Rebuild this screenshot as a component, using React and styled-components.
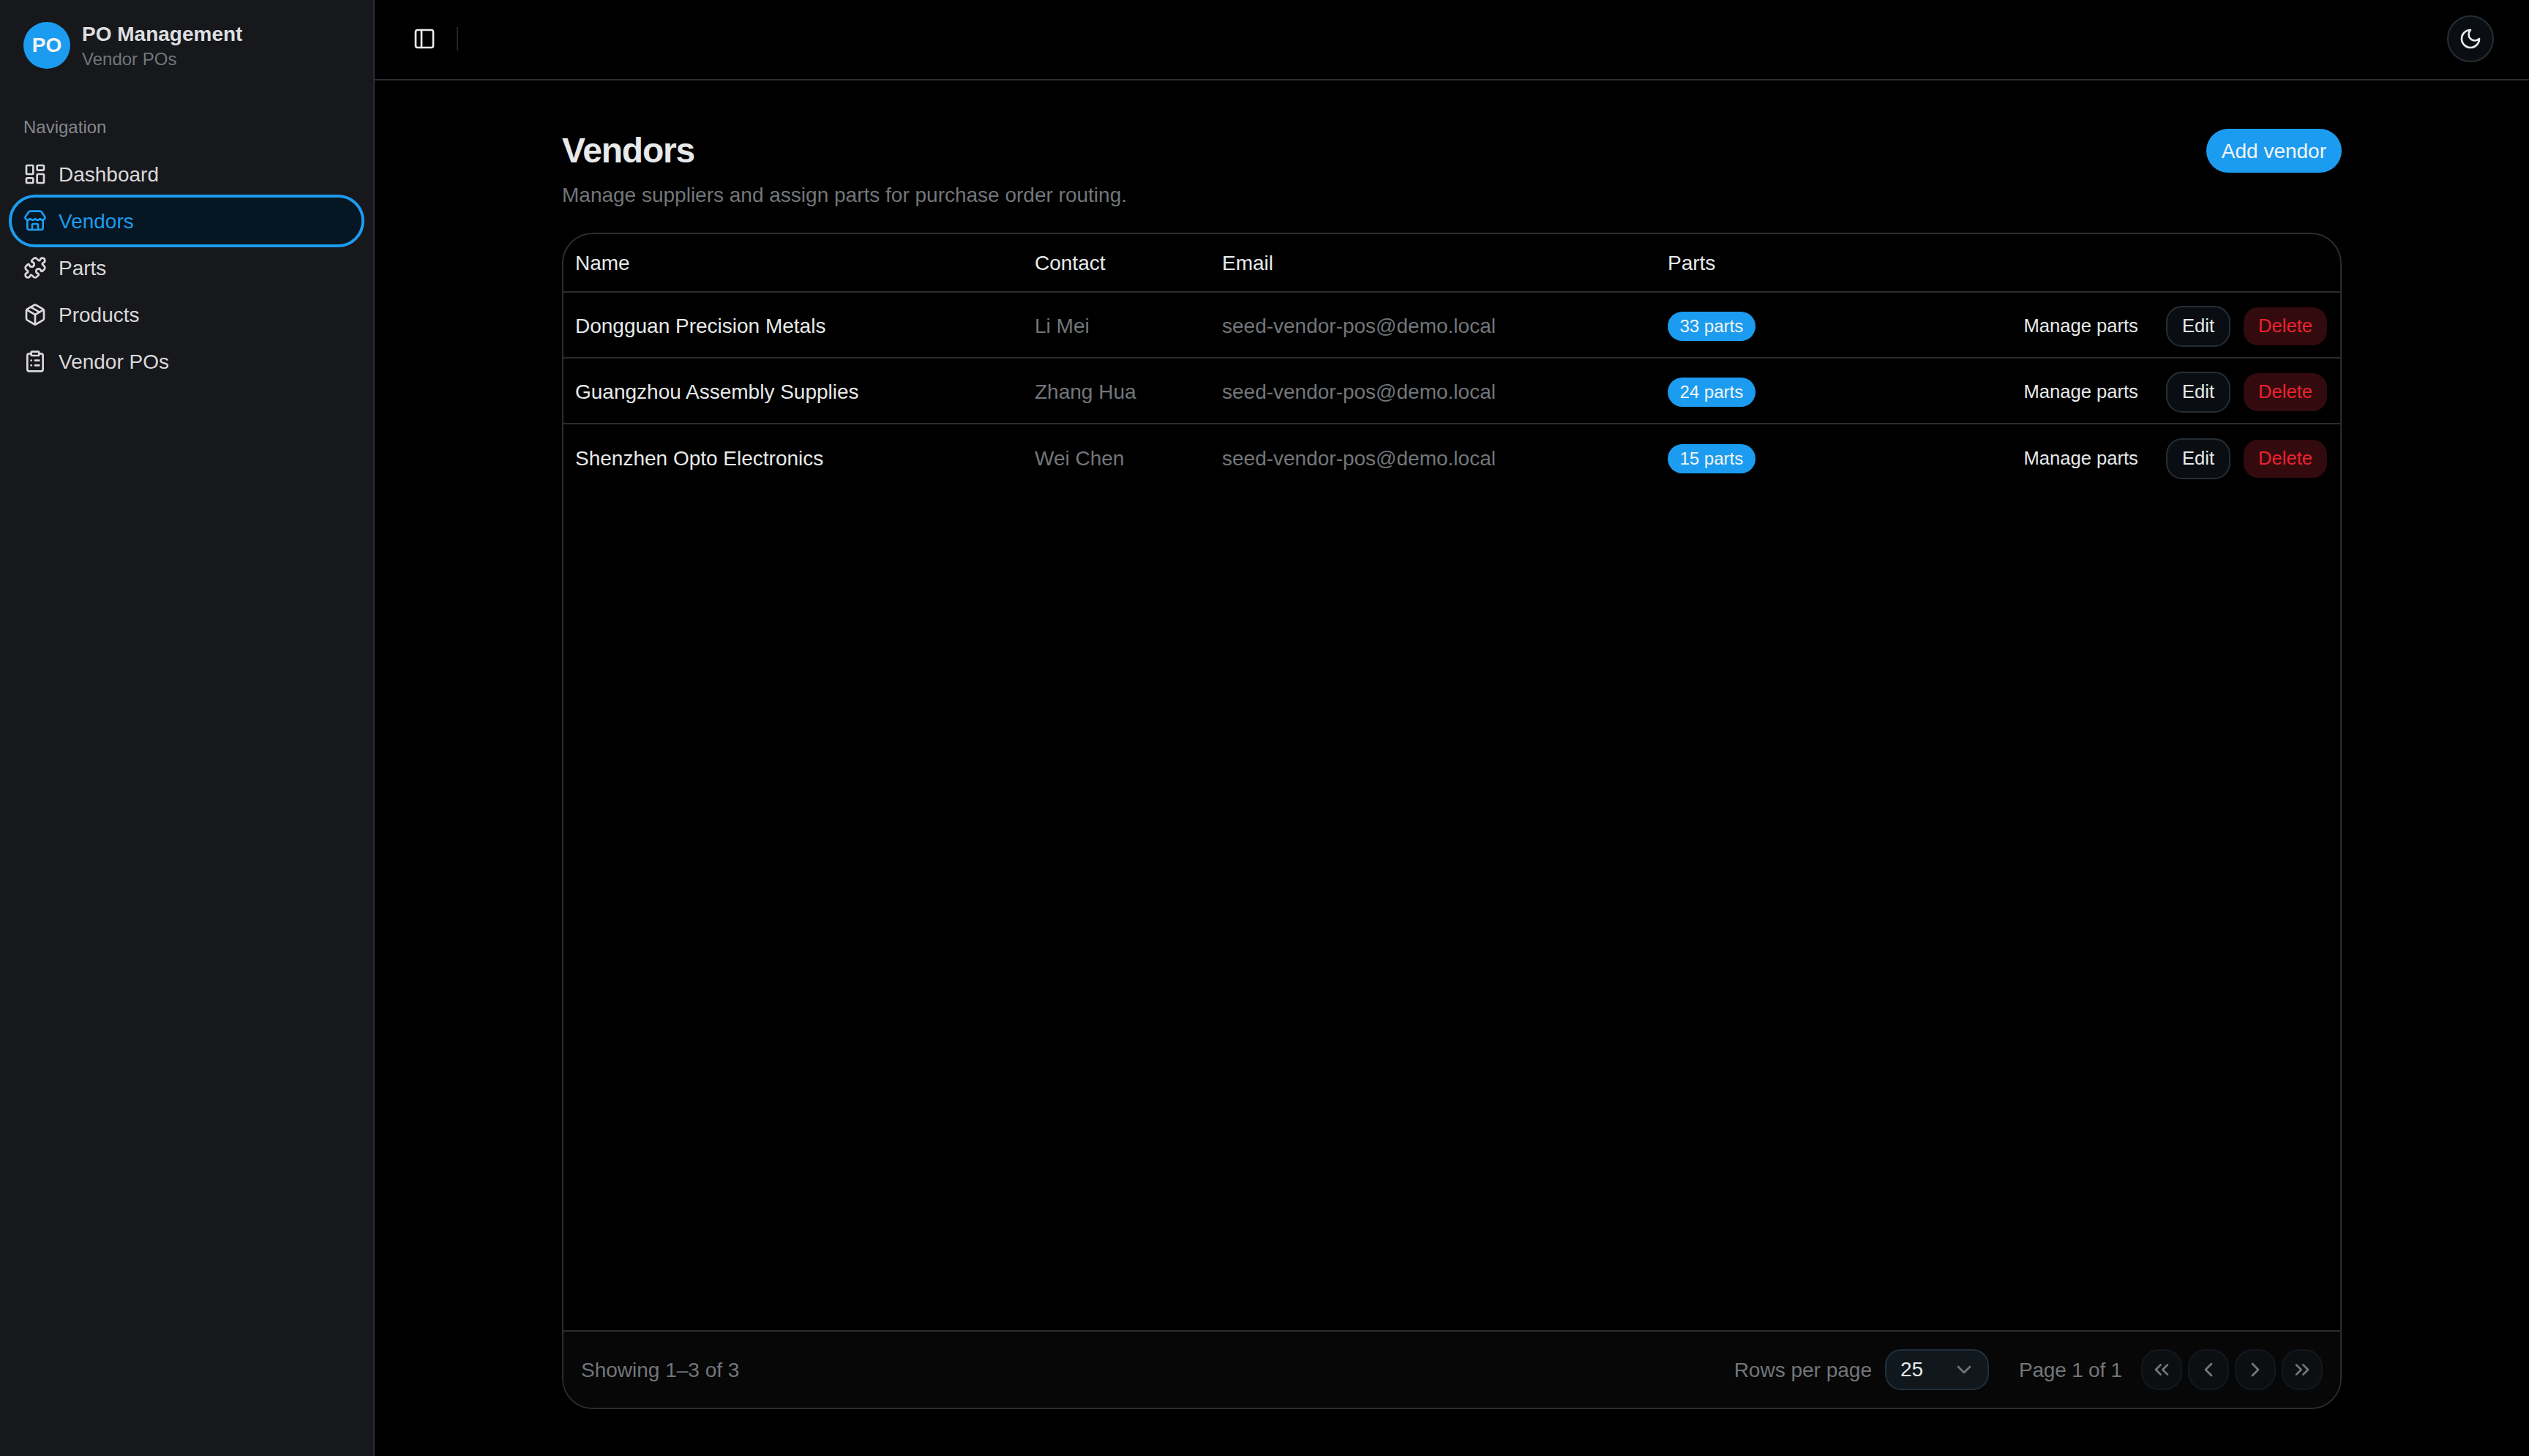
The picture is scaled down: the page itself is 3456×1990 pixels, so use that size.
import React from "react";
import styled, { createGlobalStyle } from "styled-components";
import {
  LayoutDashboard, Store, Puzzle, Package, ClipboardList, PanelLeft,
  ChevronDown, ChevronsLeft, ChevronLeft, ChevronRight, ChevronsRight,
} from "lucide-react";

const Global = createGlobalStyle`
  html, body { margin: 0; padding: 0; background: #000; }
  body { font-family: "Liberation Sans", Arial, sans-serif; color: #e7e9ea; }
  * { box-sizing: border-box; }
  button { font-family: inherit; }
`;

const Shell = styled.div`
  display: flex;
  height: 100vh;
  overflow: hidden;
  background: #000;
`;
const Sidebar = styled.aside`
  width: 512px;
  flex: none;
  background: #17181c;
  border-right: 2px solid #2a2c30;
  padding: 16px;
  color: #d9d9d9;
`;
const Brand = styled.div`
  display: flex;
  align-items: center;
  height: 92px;
  padding-left: 16px;
  gap: 16px;
  margin-bottom: 50px;
`;
const Avatar = styled.div`
  width: 64px;
  height: 64px;
  border-radius: 50%;
  background: #1c9cf0;
  color: #f2f2f2;
  font-size: 28px;
  font-weight: 700;
  display: flex;
  align-items: center;
  justify-content: center;
`;
const BrandText = styled.div`
  display: flex;
  flex-direction: column;
  padding-top: 2px;
`;
const BrandTitle = styled.div`
  font-size: 28px;
  line-height: 36px;
  font-weight: 700;
  color: #dedfe0;
`;
const BrandSub = styled.div`
  font-size: 24px;
  line-height: 32px;
  color: #72767a;
`;
const NavLabel = styled.div`
  font-size: 24px;
  line-height: 32px;
  color: #85878a;
  padding-left: 16px;
  margin-bottom: 16px;
`;
const NavList = styled.nav`
  display: flex;
  flex-direction: column;
`;
const NavItem = styled.a`
  display: flex;
  align-items: center;
  gap: 16px;
  height: 64px;
  padding-left: 16px;
  font-size: 28px;
  border-radius: 32px;
  color: ${(p) => (p.$active ? "#1c9cf0" : "#d9d9d9")};
  background: ${(p) => (p.$active ? "#061622" : "transparent")};
  outline: ${(p) => (p.$active ? "4px solid #1c9cf0" : "none")};
`;
const NavText = styled.span`
  padding-top: 2px;
`;
const Content = styled.div`
  flex: 1;
  min-width: 0;
  display: flex;
  flex-direction: column;
`;
const Topbar = styled.header`
  height: 110px;
  flex: none;
  border-bottom: 2px solid #2a2c30;
  display: flex;
  align-items: center;
  justify-content: space-between;
  padding: 0 48px 2px 40px;
`;
const TopLeft = styled.div`
  display: flex;
  align-items: center;
  gap: 16px;
`;
const IconTrigger = styled.button`
  width: 56px;
  height: 56px;
  padding: 0;
  border: 0;
  background: transparent;
  color: #e7e9ea;
  display: flex;
  align-items: center;
  justify-content: center;
`;
const VSep = styled.div`
  width: 2px;
  height: 32px;
  background: #242628;
`;
const ThemeButton = styled.button`
  width: 64px;
  height: 64px;
  padding: 0;
  border-radius: 50%;
  border: 2px solid #262e35;
  background: #0a0e12;
  color: #e7e9ea;
  display: flex;
  align-items: center;
  justify-content: center;
`;
const Page = styled.main`
  flex: 1;
  min-height: 0;
  width: 2432px;
  margin: 0 auto;
  padding: 66px 0 64px;
  display: flex;
  flex-direction: column;
`;
const PageHead = styled.div`
  display: flex;
  justify-content: space-between;
  align-items: flex-start;
  margin-bottom: 31px;
`;
const Title = styled.h1`
  margin: 0;
  font-size: 48px;
  line-height: 60px;
  font-weight: 700;
  letter-spacing: -1.2px;
  color: #e7e9ea;
`;
const Subtitle = styled.p`
  margin: 11px 0 0;
  font-size: 28px;
  line-height: 40px;
  color: #72767a;
`;
const PrimaryButton = styled.button`
  height: 60px;
  padding: 2px 21px 0 21px;
  border: 0;
  border-radius: 30px;
  background: #1c9cf0;
  color: #f4f4f4;
  font-size: 28px;
`;
const TableCard = styled.section`
  flex: 1;
  min-height: 0;
  border: 2px solid #2a2c30;
  border-radius: 42px;
  display: flex;
  flex-direction: column;
  overflow: hidden;
`;
const TableBody = styled.div`
  flex: 1;
`;
const Row = styled.div`
  display: grid;
  grid-template-columns: 628px 256px 609px 1fr;
  align-items: center;
  height: ${(p) => (p.$head ? "80px" : "90px")};
  padding-top: ${(p) => (p.$head ? "2px" : "3px")};
  border-bottom: 2px solid #2a2c30;
  &:last-child { border-bottom: 0; }
`;
const HeadCell = styled.div`
  padding-left: 16px;
  font-size: 28px;
  color: #e7e9ea;
  font-weight: 400;
`;
const Cell = styled.div`
  padding-left: 16px;
  font-size: 28px;
  color: ${(p) => (p.$muted ? "#72767a" : "#e7e9ea")};
  white-space: nowrap;
`;
const BadgeCell = styled.div`
  padding-left: 16px;
  display: flex;
  align-items: center;
  justify-content: space-between;
  padding-right: 16px;
`;
const Badge = styled.span`
  height: 40px;
  padding: 0 16.5px;
  border-radius: 20px;
  background: #1c9cf0;
  color: #f4f4f4;
  font-size: 24px;
  display: inline-flex;
  align-items: center;
`;
const Actions = styled.div`
  display: flex;
  align-items: center;
  gap: 16px;
`;
const ActionButton = styled.button`
  height: 56px;
  padding: 0 20px;
  font-size: 25.6px;
  border-radius: 22px;
  border: 2px solid ${(p) => (p.$kind === "outline" ? "#262e35" : "transparent")};
  background: ${(p) =>
    p.$kind === "outline" ? "#0a0e12" : p.$kind === "danger" ? "#330b0e" : "transparent"};
  background-clip: ${(p) => (p.$kind === "danger" ? "padding-box" : "border-box")};
  color: ${(p) => (p.$kind === "danger" ? "#ec2230" : "#e7e9ea")};
`;
const Footer = styled.footer`
  height: 106px;
  flex: none;
  border-top: 2px solid #2a2c30;
  background: #070708;
  padding: 2px 24px 0;
  display: flex;
  align-items: center;
  justify-content: space-between;
  font-size: 28px;
  color: #72767a;
`;
const Pager = styled.div`
  display: flex;
  align-items: center;
`;
const PerPage = styled.span`
  margin-right: 18px;
`;
const SelectBox = styled.div`
  width: 142px;
  height: 56px;
  margin-top: -2px;
  border: 2px solid #22303c;
  border-radius: 22px;
  background: #10171d;
  color: #e7e9ea;
  padding: 0 16px 0 19px;
  display: flex;
  align-items: center;
  justify-content: space-between;
  margin-right: 41px;
`;
const PageText = styled.span`
  margin-right: 26px;
  letter-spacing: -0.2px;
`;
const PageButtons = styled.div`
  display: flex;
  gap: 8px;
  margin-top: -2px;
`;
const PageButton = styled.button`
  width: 56px;
  height: 56px;
  padding: 0;
  border-radius: 24px;
  border: 2px solid #11181e;
  background: #0c0f12;
  color: #76797c;
  display: flex;
  align-items: center;
  justify-content: center;
`;

const MoonIcon = () => (
  <svg width="32" height="32" viewBox="0 0 24 24" fill="none" stroke="currentColor" strokeWidth="2" strokeLinecap="round" strokeLinejoin="round">
    <path d="M12 3a6 6 0 0 0 9 9 9 9 0 1 1-9-9Z" />
  </svg>
);

const nav = [
  { label: "Dashboard", icon: LayoutDashboard },
  { label: "Vendors", icon: Store, active: true },
  { label: "Parts", icon: Puzzle },
  { label: "Products", icon: Package },
  { label: "Vendor POs", icon: ClipboardList },
];
const vendors = [
  { name: "Dongguan Precision Metals", contact: "Li Mei", parts: 33 },
  { name: "Guangzhou Assembly Supplies", contact: "Zhang Hua", parts: 24 },
  { name: "Shenzhen Opto Electronics", contact: "Wei Chen", parts: 15 },
];
const pageIcons = [ChevronsLeft, ChevronLeft, ChevronRight, ChevronsRight];

export default function App() {
  return (
    <Shell>
      <Global />
      <Sidebar>
        <Brand>
          <Avatar>PO</Avatar>
          <BrandText>
            <BrandTitle>PO Management</BrandTitle>
            <BrandSub>Vendor POs</BrandSub>
          </BrandText>
        </Brand>
        <NavLabel>Navigation</NavLabel>
        <NavList>
          {nav.map(({ label, icon: Icon, active }) => (
            <NavItem key={label} $active={active}>
              <Icon size={32} />
              <NavText>{label}</NavText>
            </NavItem>
          ))}
        </NavList>
      </Sidebar>
      <Content>
        <Topbar>
          <TopLeft>
            <IconTrigger><PanelLeft size={32} /></IconTrigger>
            <VSep />
          </TopLeft>
          <ThemeButton><MoonIcon /></ThemeButton>
        </Topbar>
        <Page>
          <PageHead>
            <div>
              <Title>Vendors</Title>
              <Subtitle>Manage suppliers and assign parts for purchase order routing.</Subtitle>
            </div>
            <PrimaryButton>Add vendor</PrimaryButton>
          </PageHead>
          <TableCard>
            <TableBody>
              <Row $head>
                <HeadCell>Name</HeadCell>
                <HeadCell>Contact</HeadCell>
                <HeadCell>Email</HeadCell>
                <HeadCell>Parts</HeadCell>
              </Row>
              {vendors.map((v) => (
                <Row key={v.name}>
                  <Cell>{v.name}</Cell>
                  <Cell $muted>{v.contact}</Cell>
                  <Cell $muted>seed-vendor-pos@demo.local</Cell>
                  <BadgeCell>
                    <Badge>{v.parts} parts</Badge>
                    <Actions>
                      <ActionButton>Manage parts</ActionButton>
                      <ActionButton $kind="outline">Edit</ActionButton>
                      <ActionButton $kind="danger">Delete</ActionButton>
                    </Actions>
                  </BadgeCell>
                </Row>
              ))}
            </TableBody>
            <Footer>
              <span>Showing 1–3 of 3</span>
              <Pager>
                <PerPage>Rows per page</PerPage>
                <SelectBox>
                  25
                  <ChevronDown size={32} color="#72767a" />
                </SelectBox>
                <PageText>Page 1 of 1</PageText>
                <PageButtons>
                  {pageIcons.map((Icon, i) => (
                    <PageButton key={i}><Icon size={32} /></PageButton>
                  ))}
                </PageButtons>
              </Pager>
            </Footer>
          </TableCard>
        </Page>
      </Content>
    </Shell>
  );
}
